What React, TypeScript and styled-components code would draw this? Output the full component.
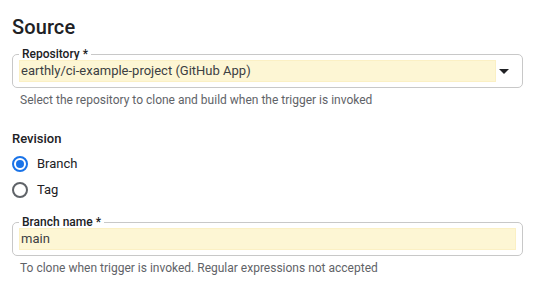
import React from "react";
import styled, { createGlobalStyle } from "styled-components";

const Global = createGlobalStyle`
  html, body { margin: 0; padding: 0; background: #ffffff; }
  body { font-family: Roboto, "Noto Sans", "Liberation Sans", sans-serif; color: #202124; }
`;

const Page = styled.div`
  width: 511px;
  padding: 15px 0 0 12px;
  display: flex;
  flex-direction: column;
`;

const Title = styled.h2`
  margin: 0;
  font-size: 20px;
  line-height: 24px;
  font-weight: 500;
  color: #202124;
  letter-spacing: 0.1px;
`;

const Field = styled.fieldset<{ $mt: number }>`
  margin: ${(p) => p.$mt}px 0 0 0;
  padding: 0 6px 5px 6px;
  border: 1px solid #c8c8c8;
  border-radius: 5px;
  min-width: 0;
  display: block;
`;

const Legend = styled.legend`
  padding: 0 3px;
  margin-left: 0;
  font-size: 12px;
  line-height: 14px;
  font-weight: 500;
  color: #202124;
`;

const Row = styled.div`
  display: flex;
  align-items: center;
  margin-top: -1px;
`;

const Fill = styled.div`
  flex: 1;
  height: 22px;
  box-sizing: border-box;
  background: #fdf6d4;
  border: 1px solid #fbf0c4;
  font-size: 13px;
  line-height: 20px;
  padding-left: 1px;
  color: #3c4043;
  white-space: nowrap;
`;

const Arrow = styled.div`
  width: 10px;
  height: 22px;
  margin: 0 7px 0 3px;
  display: flex;
  align-items: center;
  justify-content: center;
`;

const Helper = styled.div`
  font-size: 12px;
  line-height: 16px;
  color: #5f6368;
  padding-left: 8px;
  margin-top: 4px;
`;

const Label = styled.div`
  font-size: 13px;
  line-height: 16px;
  font-weight: 500;
  color: #202124;
  margin-top: 23px;
`;

const RadioRow = styled.label<{ $mt: number }>`
  display: flex;
  align-items: center;
  gap: 9px;
  margin-top: ${(p) => p.$mt}px;
  font-size: 13px;
  line-height: 16px;
  color: #202124;
`;

const RadioOuter = styled.span<{ $on: boolean }>`
  width: 16px;
  height: 16px;
  box-sizing: border-box;
  border-radius: 50%;
  border: 2px solid ${(p) => (p.$on ? "#1a73e8" : "#5f6368")};
  display: flex;
  align-items: center;
  justify-content: center;
`;

const RadioDot = styled.span`
  width: 8px;
  height: 8px;
  border-radius: 50%;
  background: #1a73e8;
`;

function Radio({ on, label, mt }: { on: boolean; label: string; mt: number }) {
  return (
    <RadioRow $mt={mt}>
      <RadioOuter $on={on}>{on && <RadioDot />}</RadioOuter>
      {label}
    </RadioRow>
  );
}

export default function App() {
  return (
    <>
      <Global />
      <Page>
        <Title>Source</Title>
        <Field $mt={8}>
          <Legend>Repository *</Legend>
          <Row>
            <Fill>earthly/ci-example-project (GitHub App)</Fill>
            <Arrow>
              <svg width="10" height="5" viewBox="0 0 10 5">
                <path d="M0 0 L10 0 L5 5 Z" fill="#202124" />
              </svg>
            </Arrow>
          </Row>
        </Field>
        <Helper>Select the repository to clone and build when the trigger is invoked</Helper>
        <Label>Revision</Label>
        <Radio on={true} label="Branch" mt={9} />
        <Radio on={false} label="Tag" mt={10} />
        <Field $mt={17}>
          <Legend>Branch name *</Legend>
          <Row>
            <Fill>main</Fill>
          </Row>
        </Field>
        <Helper>To clone when trigger is invoked. Regular expressions not accepted</Helper>
      </Page>
    </>
  );
}
